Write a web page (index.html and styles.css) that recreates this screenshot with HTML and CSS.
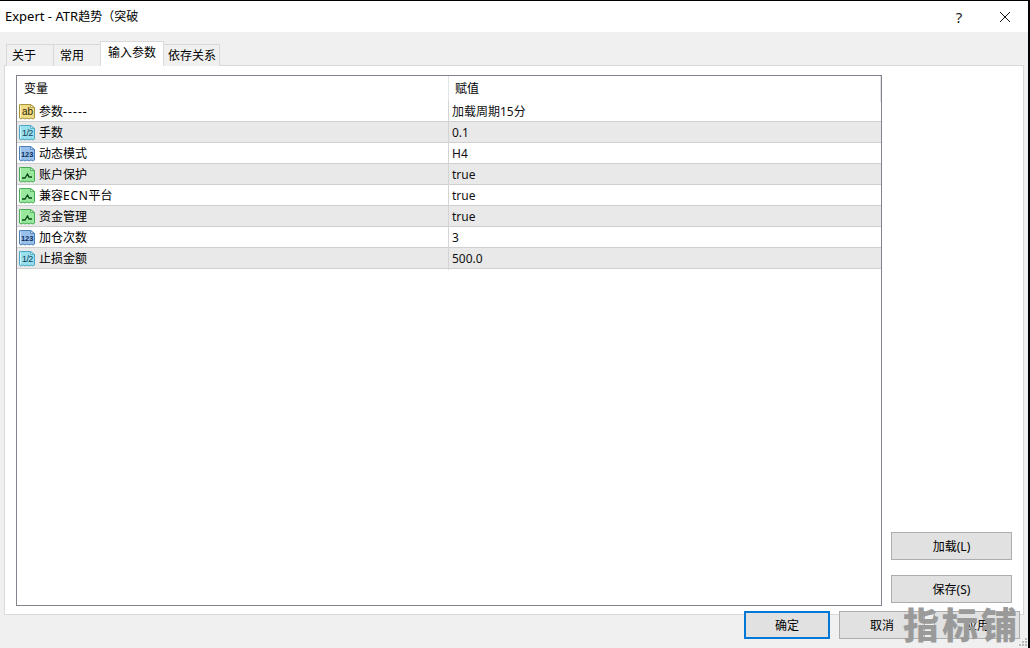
FILE: index.html
```html
<!DOCTYPE html>
<html lang="zh">
<head>
<meta charset="utf-8">
<title>Expert - ATR趋势（突破</title>
<link rel="stylesheet" href="styles.css">
</head>
<body>
<svg class="defs" width="0" height="0" aria-hidden="true">
  <defs>
    <symbol id="doc" viewBox="0 0 18 18">
      <path d="M1.5 2 Q1.5 1 2.5 1.5 H12.5 L16.5 4.5 V15 L15 16 L13 15 L11 16 L9 15 L7 16 L5 15 L3 16 L1.5 15 Z" fill="currentColor" stroke="var(--edge)" stroke-width="1"/>
      <path d="M12.5 1.5 V4.5 H16.5 Z" fill="#fff" fill-opacity=".5" stroke="var(--edge)" stroke-width=".8"/>
      <path d="M2.5 2.5 V14.5" fill="none" stroke="var(--shade)" stroke-width="1"/>
    </symbol>
  </defs>
</svg>
<div class="window">
  <header class="titlebar">
    <span class="title">Expert - ATR<span class="title-cjk">趋势（突破</span></span>
    <span class="help">?</span>
    <svg class="close" width="12" height="12" viewBox="0 0 12 12"><path d="M1 1 L11 11 M11 1 L1 11" stroke="#111" stroke-width="1" fill="none"/></svg>
  </header>
  <nav class="tabs">
    <span class="tab tab-a">关于</span>
    <span class="tab tab-b">常用</span>
    <span class="tab tab-active">输入参数</span>
    <span class="tab tab-d">依存关系</span>
  </nav>
  <main class="panel">
    <section class="list">
      <div class="row head">
        <span class="head-name">变量</span>
        <span class="head-value">赋值</span>
      </div>
      <div class="row">
        <span class="name"><svg class="ico ab" width="18" height="18"><use href="#doc"/><text x="4" y="11.5" class="ico-text">ab</text></svg><span>参数<span class="wide">-----</span></span></span>
        <span class="value">加载周期15分</span>
      </div>
      <div class="row alt">
        <span class="name"><svg class="ico half" width="18" height="18"><use href="#doc"/><text x="4" y="11.5" class="ico-text small">1/2</text></svg><span>手数</span></span>
        <span class="value">0.1</span>
      </div>
      <div class="row">
        <span class="name"><svg class="ico num" width="18" height="18"><use href="#doc"/><text x="3" y="12" class="ico-text tiny">123</text></svg><span>动态模式</span></span>
        <span class="value">H4</span>
      </div>
      <div class="row alt">
        <span class="name"><svg class="ico bool" width="18" height="18"><use href="#doc"/><path class="tick" d="M4 12 H7 L9.5 8 L11 11 H14"/></svg><span>账户保护</span></span>
        <span class="value">true</span>
      </div>
      <div class="row">
        <span class="name"><svg class="ico bool" width="18" height="18"><use href="#doc"/><path class="tick" d="M4 12 H7 L9.5 8 L11 11 H14"/></svg><span>兼容<span class="ecn">ECN</span>平台</span></span>
        <span class="value">true</span>
      </div>
      <div class="row alt">
        <span class="name"><svg class="ico bool" width="18" height="18"><use href="#doc"/><path class="tick" d="M4 12 H7 L9.5 8 L11 11 H14"/></svg><span>资金管理</span></span>
        <span class="value">true</span>
      </div>
      <div class="row">
        <span class="name"><svg class="ico num" width="18" height="18"><use href="#doc"/><text x="3" y="12" class="ico-text tiny">123</text></svg><span>加仓次数</span></span>
        <span class="value">3</span>
      </div>
      <div class="row alt">
        <span class="name"><svg class="ico half" width="18" height="18"><use href="#doc"/><text x="4" y="11.5" class="ico-text small">1/2</text></svg><span>止损金额</span></span>
        <span class="value">500.0</span>
      </div>
    </section>
    <aside class="side">
      <button class="btn side-btn">加载(L)</button>
      <button class="btn side-btn">保存(S)</button>
    </aside>
  </main>
  <footer class="footer">
    <button class="btn foot-btn primary">确定</button>
    <button class="btn foot-btn">取消</button>
    <button class="btn foot-btn">应用</button>
  </footer>
  <div class="watermark">指标铺</div>
  <svg class="grip" width="10" height="10" viewBox="0 0 10 10"><path d="M7 1h2v2h-2z M4 4h2v2h-2z M7 4h2v2h-2z M1 7h2v2h-2z M4 7h2v2h-2z M7 7h2v2h-2z" fill="#b8b8b8"/></svg>
</div>
</body>
</html>
```
FILE: styles.css
```css
* { box-sizing: border-box; }
html, body { margin: 0; padding: 0; }
body {
  width: 1030px;
  height: 648px;
  overflow: hidden;
  background: #f0f0f0;
  color: #000;
  font-family: "Noto Sans", "Noto Sans CJK SC", sans-serif;
  font-size: 12px;
}
.defs { position: absolute; }
.window {
  position: relative;
  width: 1030px;
  height: 648px;
  background: #f0f0f0;
  border-top: 1px solid #000;
  border-right: 2px solid #000;
  display: flex;
  flex-direction: column;
}
.titlebar {
  height: 31px;
  flex: none;
  background: #fff;
  display: flex;
  align-items: center;
  padding-left: 5px;
}
.title { font-size: 13px; flex: 1; line-height: 31px; }
.title-cjk { font-size: 12px; }
.help { font-size: 15px; width: 10px; margin-right: 35px; color: #222; text-align: center; }
.close { margin-right: 17px; }
.tabs {
  display: flex;
  align-items: flex-end;
  height: 34px;
  flex: none;
  padding-left: 6px;
  position: relative;
  z-index: 1;
  margin-bottom: -1px;
}
.tab {
  height: 22px;
  background: #f0f0f0;
  border: 1px solid #d9d9d9;
  border-bottom: 0;
  display: flex;
  align-items: center;
  padding-left: 5px;
  line-height: 20px;
  margin-right: -1px;
}
.tab-a { width: 48px; }
.tab-b { width: 48px; padding-left: 6px; }
.tab-active {
  width: 64px;
  height: 25px;
  background: #fff;
  position: relative;
  z-index: 1;
  padding-left: 7px;
  padding-bottom: 3px;
}
.tab-d { width: 57px; padding-left: 4px; }
.panel {
  width: 1020px;
  height: 550px;
  flex: none;
  margin-left: 4px;
  background: #fff;
  border: 1px solid #d9d9d9;
  display: flex;
  padding: 9px 11px 8px 11px;
}
.list {
  width: 866px;
  height: 531px;
  flex: none;
  border: 1px solid #82828c;
  background: #fff;
}
.row {
  display: grid;
  grid-template-columns: 432px 432px;
  height: 21px;
  border-bottom: 1px solid #cfcfcf;
  line-height: 22px;
  width: 864px;
}
.row.alt { background: #e9e9e9; }
.row.head {
  height: 25px;
  line-height: 26px;
  border-bottom: 0;
  width: 864px;
}
.head-name { padding-left: 7px; border-right: 1px solid #e4e4e4; }
.head-value { padding-left: 6px; border-right: 1px solid #e4e4e4; width: 432px; }
.name {
  display: flex;
  align-items: center;
  gap: 3px;
  padding-left: 1px;
  border-right: 1px solid #d4d4d4;
}
.wide { letter-spacing: 1.1px; }
.ecn { letter-spacing: .7px; }
.value { padding-left: 3px; color: #111; }
.ico { flex: none; }
.ab { color: #f0dc84; --edge: #a8943c; --shade: #fbf3c4; }
.half { color: #98e0ee; --edge: #4aa6c4; --shade: #d2f4fa; }
.num { color: #98c0ea; --edge: #4a7fb8; --shade: #cfe2f6; }
.bool { color: #98e89e; --edge: #48aa54; --shade: #d4f8d6; }
.ico-text {
  font-family: "Liberation Sans", sans-serif;
  font-size: 10px;
  fill: #2c2408;
}
.ico-text.small { font-size: 9px; letter-spacing: -.6px; fill: #123c58; }
.ico-text.tiny { font-size: 7.5px; font-weight: 700; letter-spacing: -.1px; fill: #0c2c58; }
.tick { fill: none; stroke: #0c4a18; stroke-width: 1.3; }
.side {
  flex: 1;
  display: flex;
  flex-direction: column;
  justify-content: flex-end;
  align-items: flex-end;
  gap: 15px;
  padding-bottom: 3px;
}
.btn {
  font: inherit;
  color: #000;
  background: #e1e1e1;
  border: 1px solid #adadad;
  padding: 0;
  height: 28px;
}
.side-btn { width: 121px; }
.footer {
  display: flex;
  justify-content: flex-end;
  gap: 9px;
  margin-top: -4px;
  padding-right: 8px;
  position: relative;
}
.foot-btn { width: 86px; }
.primary { border: 2px solid #0078d7; }
.watermark {
  position: absolute;
  left: 903px;
  top: 597px;
  font-family: "Noto Sans CJK SC", sans-serif;
  font-weight: 900;
  font-size: 36px;
  letter-spacing: 3px;
  line-height: 50px;
  color: #9a9a9a;
  white-space: nowrap;
}
.grip { position: absolute; right: 0; bottom: 1px; }
```
